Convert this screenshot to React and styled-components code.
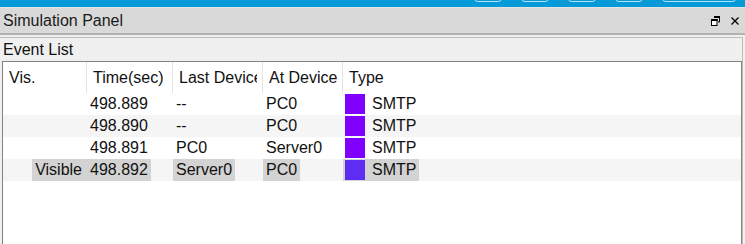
import React from 'react';
import styled, { createGlobalStyle } from 'styled-components';

const GlobalStyle = createGlobalStyle`
  html, body {
    margin: 0;
    padding: 0;
    background: #f0f0f0;
    overflow: hidden;
  }
  body {
    font-family: "Liberation Sans", Arial, sans-serif;
    font-size: 16px;
    color: #111;
  }
`

const columns = [
  { key: 'vis', label: 'Vis.', width: 84 },
  { key: 'time', label: 'Time(sec)', width: 86 },
  { key: 'last', label: 'Last Device', width: 90 },
  { key: 'at', label: 'At Device', width: 80 },
  { key: 'type', label: 'Type', width: null },
]

const events = [
  { vis: '', time: '498.889', last: '--', at: 'PC0', type: 'SMTP', color: '#8000ff' },
  { vis: '', time: '498.890', last: '--', at: 'PC0', type: 'SMTP', color: '#8000ff' },
  { vis: '', time: '498.891', last: 'PC0', at: 'Server0', type: 'SMTP', color: '#8000ff' },
  { vis: 'Visible', time: '498.892', last: 'Server0', at: 'PC0', type: 'SMTP', color: '#5e2cf2', selected: true },
]

const toolButtons = [30, 30, 30, 30, 76]

const gridTemplate = columns.map(c => (c.width ? `${c.width}px` : '1fr')).join(' ')

function RestoreIcon() {
  return (
    <svg width="9" height="10" viewBox="0 0 9 10" fill="none">
      <path d="M3 0.5h5.5v5.5H7" stroke="#000" strokeWidth="1" />
      <rect x="3" y="0" width="6" height="2" fill="#000" />
      <rect x="0.5" y="3.5" width="5.5" height="6" stroke="#000" strokeWidth="1" fill="#fff" />
      <rect x="0" y="3" width="6.5" height="2" fill="#000" />
    </svg>
  )
}

function CloseIcon() {
  return (
    <svg width="8" height="8" viewBox="0 0 8 8">
      <path d="M0.5 0.5L7.5 7.5M7.5 0.5L0.5 7.5" stroke="#000" strokeWidth="1.3" />
    </svg>
  )
}

function App() {
  return (
    <Window>
      <GlobalStyle />
      <TopBar>
        {toolButtons.map((w, i) => (
          <ToolButton key={i} $width={w} />
        ))}
      </TopBar>
      <PanelHeader>
        <PanelTitle>Simulation Panel</PanelTitle>
        <HeaderIcons>
          <RestoreIcon />
          <CloseIcon />
        </HeaderIcons>
      </PanelHeader>
      <Group>
        <GroupTitle>Event List</GroupTitle>
        <Table>
          <HeaderRow>
            {columns.map(c => (
              <HeaderCell key={c.key}>
                <HeaderLabel>{c.label}</HeaderLabel>
              </HeaderCell>
            ))}
          </HeaderRow>
          {events.map((ev, i) => (
            <Row key={i} $alt={i % 2 === 1}>
              <Cell $right>
                {ev.vis && <CellBox $selected={ev.selected} $vis>{ev.vis}</CellBox>}
              </Cell>
              <Cell><CellBox $selected={ev.selected}>{ev.time}</CellBox></Cell>
              <Cell><CellBox $selected={ev.selected}>{ev.last}</CellBox></Cell>
              <Cell><CellBox $selected={ev.selected}>{ev.at}</CellBox></Cell>
              <Cell>
                <CellBox $selected={ev.selected} $type>
                  <Swatch $color={ev.color} />
                  {ev.type}
                </CellBox>
              </Cell>
            </Row>
          ))}
        </Table>
      </Group>
    </Window>
  )
}

export default App

const Window = styled.div`
  width: 745px;
  height: 244px;
  display: flex;
  flex-direction: column;
  overflow: hidden;
`

const TopBar = styled.div`
  height: 7px;
  background: #069bd8;
  border-bottom: 1px solid #e4e4e4;
  display: flex;
  align-items: flex-end;
  gap: 17px;
  padding-left: 473px;
  overflow: hidden;
`

const ToolButton = styled.div`
  flex: none;
  width: ${p => p.$width}px;
  height: 24px;
  margin-bottom: 5px;
  box-sizing: border-box;
  border: 1px solid #b9e2f4;
  border-radius: 5px;
`

const PanelHeader = styled.div`
  height: 25px;
  background: #d9d9d9;
  border-bottom: 2px solid #b2b2b2;
  display: flex;
  align-items: center;
  justify-content: space-between;
  padding: 0 6px 0 3px;
`

const PanelTitle = styled.div`
  font-size: 16px;
  color: #1a1a1a;
`

const HeaderIcons = styled.div`
  display: flex;
  align-items: center;
  gap: 11px;
  padding-top: 1px;
`

const Group = styled.div`
  flex: 1;
  margin-top: 2px;
  border-top: 1px solid #bdbdbd;
  border-right: 1px solid #bdbdbd;
  margin-right: 2px;
  display: flex;
  flex-direction: column;
  padding: 0 0 0 2px;
`

const GroupTitle = styled.div`
  height: 23px;
  line-height: 23px;
  padding-left: 1px;
`

const Table = styled.div`
  flex: 1;
  background: #fff;
  border: 1px solid #828282;
  border-bottom: none;
`

const HeaderRow = styled.div`
  display: grid;
  grid-template-columns: ${gridTemplate};
  height: 31px;
`

const HeaderCell = styled.div`
  display: flex;
  align-items: center;
  padding: 0 5px 0 6px;
  min-width: 0;
  border-right: 1px solid #e3e3e3;
  &:last-child {
    border-right: none;
  }
`

const HeaderLabel = styled.span`
  white-space: nowrap;
  overflow: hidden;
`

const Row = styled.div`
  display: grid;
  grid-template-columns: ${gridTemplate};
  height: 22px;
  background: ${p => (p.$alt ? '#f5f5f5' : '#fff')};
`

const Cell = styled.div`
  display: flex;
  justify-content: ${p => (p.$right ? 'flex-end' : 'flex-start')};
  white-space: nowrap;
  overflow: hidden;
`

const CellBox = styled.div`
  display: flex;
  align-items: center;
  height: 22px;
  padding: ${p => (p.$vis ? '0 5px 0 3px' : p.$type ? '0 3px 0 2px' : '0 3px')};
  background: ${p => (p.$selected ? '#d3d3d3' : 'transparent')};
`

const Swatch = styled.span`
  width: 20px;
  height: 20px;
  margin-right: 7px;
  background: ${p => p.$color};
`
